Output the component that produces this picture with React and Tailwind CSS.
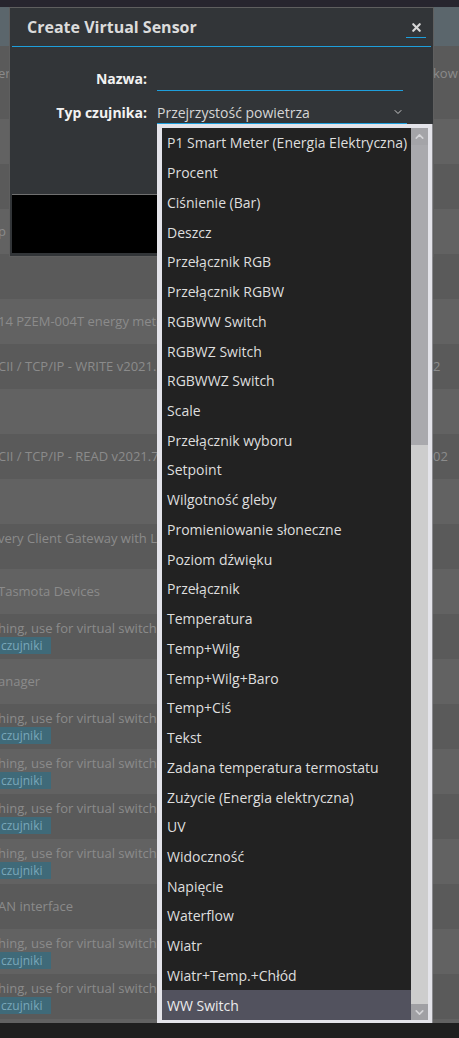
import React from "react";
import { ChevronDown, ChevronUp, X } from "lucide-react";

const sensorTypes = [
  "P1 Smart Meter (Energia Elektryczna)",
  "Procent",
  "Ciśnienie (Bar)",
  "Deszcz",
  "Przełącznik RGB",
  "Przełącznik RGBW",
  "RGBWW Switch",
  "RGBWZ Switch",
  "RGBWWZ Switch",
  "Scale",
  "Przełącznik wyboru",
  "Setpoint",
  "Wilgotność gleby",
  "Promieniowanie słoneczne",
  "Poziom dźwięku",
  "Przełącznik",
  "Temperatura",
  "Temp+Wilg",
  "Temp+Wilg+Baro",
  "Temp+Ciś",
  "Tekst",
  "Zadana temperatura termostatu",
  "Zużycie (Energia elektryczna)",
  "UV",
  "Widoczność",
  "Napięcie",
  "Waterflow",
  "Wiatr",
  "Wiatr+Temp.+Chłód",
  "WW Switch",
];

const dummy = "hing, use for virtual switches";

// hardware rows behind the dialog
const rows = [
  { h: "h-[73px]", light: false, text: "er", right: "kow", top: true },
  { h: "h-[45px]", light: true, text: "" },
  { h: "h-[45px]", light: false, text: "" },
  { h: "h-[45px]", light: true, text: "p" },
  { h: "h-[45px]", light: false, text: "" },
  { h: "h-[45px]", light: true, text: "14 PZEM-004T energy meter" },
  { h: "h-[45px]", light: false, text: "CII / TCP/IP - WRITE v2021.12", right: "2" },
  { h: "h-[45px]", light: true, text: "" },
  { h: "h-[45px]", light: false, text: "CII / TCP/IP - READ v2021.7", right: "02" },
  { h: "h-[45px]", light: true, text: "" },
  { h: "h-[45px]", light: false, text: "very Client Gateway with LAN", two: true },
  { h: "h-[45px]", light: true, text: "Tasmota Devices" },
  { h: "h-[45px]", light: false, text: dummy, badge: true },
  { h: "h-[45px]", light: true, text: "anager" },
  { h: "h-[45px]", light: false, text: dummy, badge: true },
  { h: "h-[45px]", light: true, text: dummy, badge: true },
  { h: "h-[45px]", light: false, text: dummy, badge: true },
  { h: "h-[45px]", light: true, text: dummy, badge: true },
  { h: "h-[45px]", light: false, text: "AN interface" },
  { h: "h-[45px]", light: true, text: dummy, badge: true },
  { h: "h-[45px]", light: false, text: dummy, badge: true },
  { h: "h-[4px]", light: true, text: "" },
];

const App = () => {
  return (
    <div className="relative w-[459px] h-[1038px] overflow-hidden bg-[#1f1f1f] font-['Open_Sans','Noto_Sans',sans-serif]">
      {/* Background page */}
      <div className="h-[7px] bg-[#27252e]" />
      <div className="h-[39px] bg-[#5b666c]" />
      {rows.map((r, i) => (
        <div
          key={i}
          className={`${r.h} flex text-[13px] text-[#8b8b8b] ${
            r.light ? "bg-[#626262]" : "bg-[#5a5a5a]"
          }`}
        >
          <div className="w-[433px] overflow-hidden whitespace-nowrap">
            {r.badge || r.two ? (
              <div className="flex flex-col pt-[4px] -ml-[2px]">
                <span className="leading-[20px]">{r.text}</span>
                {r.badge && (
                  <span className="-mt-[1px] w-fit bg-[#3f6a79] text-[#79a7b9] text-[12px] leading-[17px] pl-[3px] pr-[9px]">
                    czujniki
                  </span>
                )}
              </div>
            ) : (
              <div
                className={`flex h-full -ml-[2px] ${
                  r.top ? "items-start pt-[18px]" : "items-center"
                }`}
              >
                {r.text}
              </div>
            )}
          </div>
          <div
            className={`flex-1 whitespace-nowrap overflow-hidden flex ${
              r.top ? "items-start pt-[18px]" : "items-center"
            }`}
          >
            {r.right}
          </div>
        </div>
      ))}

      {/* Dialog */}
      <div className="absolute left-[9px] top-[7px] w-[425px] h-[250px] border border-[#5f5f5f] bg-[#323538] px-[2px] flex flex-col">
        <div className="h-[39px] shrink-0 flex items-center justify-between pl-[15px] pr-[5px] border-b border-[#1e9fdc]">
          <span className="text-[16px] font-bold text-[#dcdcdc]">
            Create Virtual Sensor
          </span>
          <button className="w-[20px] h-[20px] flex items-center justify-center border-b border-[#1e9fdc] mt-[2px]">
            <X size={13} strokeWidth={4} className="text-[#d8d8d8]" />
          </button>
        </div>

        <div className="grid grid-cols-[135px_1fr] gap-x-[10px] pt-[19px] text-[14px]">
          <label className="h-[25px] flex items-center justify-end font-bold text-[#f2f2f2]">
            Nazwa:
          </label>
          <div className="h-[25px] w-[246px] border-b border-[#1e9fdc]" />

          <label className="mt-[10px] h-[23px] flex items-center justify-end font-bold text-[#f2f2f2]">
            Typ czujnika:
          </label>
          <div className="mt-[10px] h-[23px] w-[250px] flex items-center justify-between border-b border-[#1e9fdc] pr-[3px] text-[#d6d6d6]">
            <span>Przejrzystość powietrza</span>
            <ChevronDown size={12} className="text-[#c8c8c8]" />
          </div>
        </div>

        <div className="flex-1" />
        <div className="h-[59px] mb-[3px] bg-black border-t border-[#707070]" />
      </div>

      {/* Open select list */}
      <div className="absolute left-[157px] top-[124px] w-[276px] h-[899px] bg-[#e4e4ea] border-r border-[#8a8a8e] pl-[5px] pr-[4px] pt-[4px] pb-[3px] flex">
        <div className="w-[249px] h-full flex flex-col bg-[#222222] text-[14px] text-[#dedede]">
          {sensorTypes.map((t, i) => (
            <div
              key={t}
              className={`flex-1 flex items-center pl-[5px] whitespace-nowrap ${
                i === sensorTypes.length - 1 ? "bg-[#52525e] text-[#ececec]" : ""
              }`}
            >
              {t}
            </div>
          ))}
        </div>
        <div className="w-[17px] h-full flex flex-col bg-[#cdcdcd]">
          <div className="h-[17px] flex items-center justify-center bg-[#a4a4a8]">
            <ChevronUp size={13} strokeWidth={3} className="text-[#d4d4d7]" />
          </div>
          <div className="h-[300px] bg-[#a9a9ad]" />
          <div className="flex-1" />
          <div className="h-[16px] flex items-center justify-center bg-[#a0a0a4]">
            <ChevronDown size={13} strokeWidth={3} className="text-[#d4d4d7]" />
          </div>
        </div>
      </div>
    </div>
  );
};

export default App;
